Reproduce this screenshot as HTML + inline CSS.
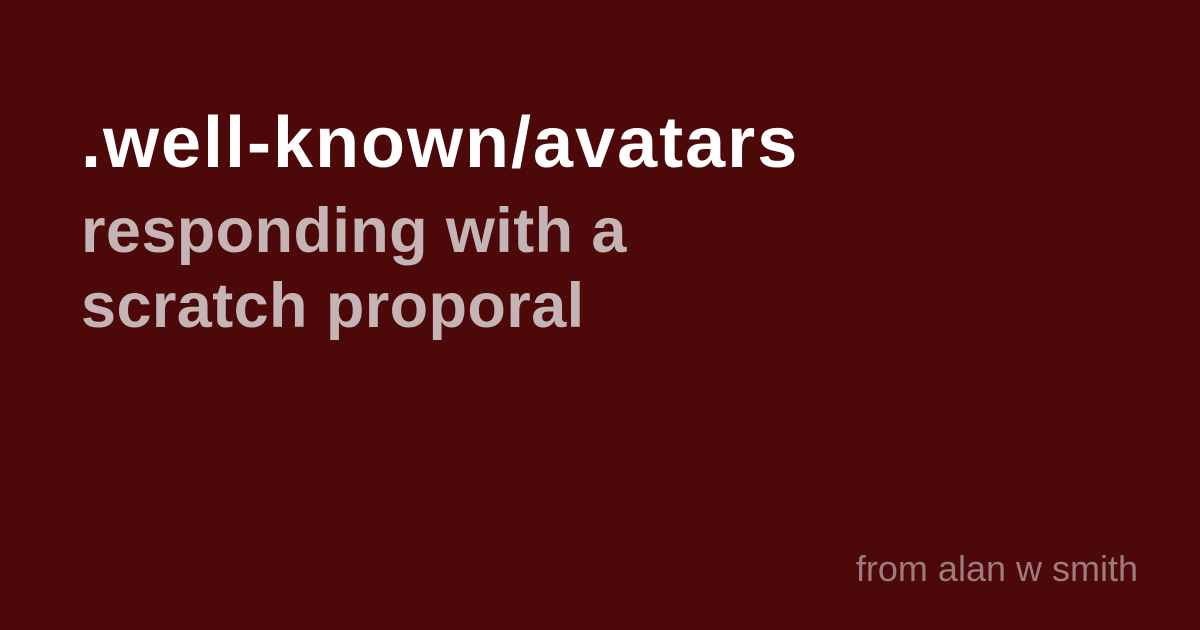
<!DOCTYPE html>
<html><head><meta charset="utf-8"><style>
html,body{margin:0;padding:0}
body{width:1200px;height:630px;background:#4d0909;position:relative;overflow:hidden;font-family:"Liberation Sans",Arial,sans-serif}
.t{position:absolute;left:81px;white-space:nowrap;font-weight:bold;line-height:1}
#a{top:107px;font-size:72px;color:#fff;letter-spacing:2px}
#b{top:200px;font-size:63px;color:#c4b4b6;letter-spacing:0.4px}
#c{top:275px;font-size:63px;color:#c4b4b6;letter-spacing:0.4px}
#d{position:absolute;right:62px;top:551px;font-size:36px;color:#9d7b7c;line-height:1;white-space:nowrap}
</style></head><body>
<div class="t" id="a">.well-known/avatars</div>
<div class="t" id="b">responding with a</div>
<div class="t" id="c">scratch proporal</div>
<div id="d">from alan w smith</div>
</body></html>
